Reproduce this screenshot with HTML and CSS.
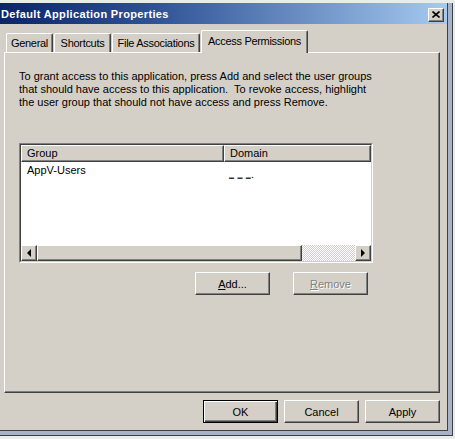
FILE: index.html
```html
<!DOCTYPE html>
<html lang="en">
  <head>
    <meta charset="UTF-8" />
    <title>Default Application Properties</title>
    <link rel="stylesheet" href="styles.css">
  </head>
  <body>
    <div class="frame">
      <div class="dialog">
        <div class="titlebar">
          <span class="title">Default Application Properties</span>
          <span class="close-btn raised">
            <svg width="8" height="7" viewBox="0 0 8 7">
              <path d="M0.5 0.5 L7.5 6.5 M7.5 0.5 L0.5 6.5" stroke="#000" stroke-width="1.6" fill="none" />
            </svg>
          </span>
        </div>

        <div class="content">
          <div class="tabs">
            <div class="tab tab-general">General</div>
            <div class="tab tab-shortcuts">Shortcuts</div>
            <div class="tab tab-files">File Associations</div>
            <div class="tab tab-access active">Access Permissions</div>
          </div>

          <div class="panel">
            <p class="intro">
              To grant access to this application, press Add and select the user groups<br>
              that should have access to this application.&nbsp; To revoke access, highlight<br>
              the user group that should not have access and press Remove.
            </p>

            <div class="listview">
              <div class="listview-inner">
                <div class="list-header">
                  <div class="hcell col-group">Group</div>
                  <div class="hcell col-domain">Domain</div>
                </div>
                <div class="list-body">
                  <div class="list-row">
                    <div class="cell col-group">AppV-Users</div>
                    <div class="cell col-domain"><span class="redacted">▬ ▬ ▬▪</span></div>
                  </div>
                </div>
                <div class="hscroll">
                  <div class="sb-btn raised"><span class="arrow-left"></span></div>
                  <div class="sb-thumb raised"></div>
                  <div class="sb-track"></div>
                  <div class="sb-btn raised"><span class="arrow-right"></span></div>
                </div>
              </div>
            </div>

            <div class="list-actions">
              <button class="btn"><u>A</u>dd...</button>
              <button class="btn disabled"><u>R</u>emove</button>
            </div>
          </div>

          <div class="dialog-buttons">
            <button class="btn default">OK</button>
            <button class="btn">Cancel</button>
            <button class="btn">Apply</button>
          </div>
        </div>
      </div>
    </div>
  </body>
</html>
```
FILE: styles.css
```css
body {
  margin: 0;
  background: #ebebeb;
  font-family: "Liberation Sans", Arial, sans-serif;
  font-size: 11px;
  color: #000;
}

.frame {
  margin-top: 3px;
  width: 453px;
  box-sizing: border-box;
  padding: 0 4px 4px 0;
  background: #a7b3c9;
  border-right: 1px solid #404040;
  border-bottom: 1px solid #404040;
}

.dialog {
  width: 448px;
  box-sizing: border-box;
  background: #d4d0c8;
  border-right: 1px solid #404040;
  border-bottom: 1px solid #404040;
  display: flex;
  flex-direction: column;
}

/* title bar */
.titlebar {
  height: 21px;
  display: flex;
  align-items: center;
  justify-content: space-between;
  padding: 0 3px 0 1px;
  background: linear-gradient(to right, #0a246a 0%, #2f5396 35%, #a6caf0 100%);
}

.title {
  color: #fff;
  font-weight: bold;
  font-size: 11px;
  letter-spacing: 0.35px;
}

.close-btn {
  width: 16px;
  height: 14px;
  box-sizing: border-box;
  display: flex;
  align-items: center;
  justify-content: center;
  background: #d4d0c8;
  margin-top: 2px;
}

.raised {
  border: 1px solid;
  border-color: #fff #404040 #404040 #fff;
  box-shadow: inset -1px -1px #808080;
  box-sizing: border-box;
  background: #d4d0c8;
}

.content {
  padding: 6px 7px 7px 4px;
  display: flex;
  flex-direction: column;
}

/* tabs */
.tabs {
  display: flex;
  align-items: flex-end;
  gap: 1px;
  padding-left: 2px;
}

.tab {
  height: 19px;
  box-sizing: border-box;
  text-align: center;
  line-height: 18px;
  letter-spacing: -0.3px;
  border-top: 1px solid #fff;
  border-left: 1px solid #fff;
  border-right: 1px solid #404040;
  box-shadow: inset -1px 0 #808080;
  border-radius: 2px 2px 0 0;
  background: #d4d0c8;
  white-space: nowrap;
  overflow: hidden;
}

.tab-general { width: 47px; }
.tab-shortcuts { width: 57px; }
.tab-files { width: 88px; }

.tab.active {
  width: 107px;
  height: 23px;
  margin-bottom: -1px;
  line-height: 20px;
  position: relative;
  z-index: 1;
}

.panel {
  height: 341px;
  box-sizing: border-box;
  border: 1px solid;
  border-color: #fff #404040 #404040 #fff;
  box-shadow: inset -1px -1px #808080;
  padding: 17px 0 0 14px;
}

.intro {
  margin: 0;
  line-height: 13px;
  white-space: nowrap;
}

/* list view */
.listview {
  margin-top: 34px;
  width: 354px;
  height: 120px;
  box-sizing: border-box;
  border: 1px solid;
  border-color: #808080 #fff #fff #808080;
}

.listview-inner {
  height: 100%;
  box-sizing: border-box;
  border: 1px solid;
  border-color: #404040 #d4d0c8 #d4d0c8 #404040;
  display: flex;
  flex-direction: column;
  background: #fff;
}

.list-header {
  display: flex;
  height: 17px;
}

.hcell {
  box-sizing: border-box;
  height: 17px;
  padding-left: 5px;
  line-height: 15px;
  background: #d4d0c8;
  border: 1px solid;
  border-color: #fff #404040 #404040 #fff;
  box-shadow: inset -1px -1px #808080;
}

.col-group {
  width: 203px;
  flex: none;
}

.col-domain {
  flex: 1;
}

.list-body {
  flex: 1;
}

.list-row {
  display: flex;
  height: 16px;
  line-height: 16px;
}

.cell {
  box-sizing: border-box;
  padding-left: 6px;
}

.cell.col-domain {
  padding-left: 5px;
}

.redacted {
  font-size: 5px;
  color: #333;
  vertical-align: -5px;
  letter-spacing: 1px;
}

/* scroll bar */
.hscroll {
  display: flex;
  height: 16px;
}

.sb-btn {
  width: 16px;
  height: 16px;
  display: flex;
  align-items: center;
  justify-content: center;
}

.sb-thumb {
  width: 265px;
  height: 16px;
}

.sb-track {
  flex: 1;
  background: repeating-conic-gradient(#fff 0 25%, #d4d0c8 0 50%) 0 0 / 2px 2px;
}

.arrow-left {
  width: 0;
  height: 0;
  border-top: 4px solid transparent;
  border-bottom: 4px solid transparent;
  border-right: 4px solid #000;
}

.arrow-right {
  width: 0;
  height: 0;
  border-top: 4px solid transparent;
  border-bottom: 4px solid transparent;
  border-left: 4px solid #000;
}

/* buttons */
.list-actions {
  width: 354px;
  box-sizing: border-box;
  margin-top: 9px;
  padding-right: 5px;
  display: flex;
  justify-content: flex-end;
  gap: 23px;
}

.btn {
  width: 75px;
  height: 23px;
  box-sizing: border-box;
  padding: 0;
  font-family: "Liberation Sans", Arial, sans-serif;
  font-size: 11px;
  color: #000;
  background: #d4d0c8;
  border: 1px solid;
  border-color: #fff #404040 #404040 #fff;
  box-shadow: inset -1px -1px #808080;
}

.btn.disabled {
  color: #808080;
  text-shadow: 1px 1px #fff;
}

.btn.default {
  border-color: #000;
  box-shadow: inset 1px 1px #fff, inset -1px -1px #404040, inset -2px -2px #808080;
}

.dialog-buttons {
  margin-top: 7px;
  display: flex;
  justify-content: flex-end;
  gap: 6px;
}
```
